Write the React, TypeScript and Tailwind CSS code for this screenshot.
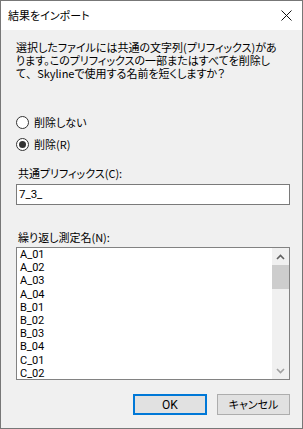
import React from "react";

const jp = "font-['Noto_Sans_CJK_JP',sans-serif] [font-feature-settings:'palt']";
const latin = "font-['Roboto','Noto_Sans_CJK_JP',sans-serif]";

const items = ["A_01", "A_02", "A_03", "A_04", "B_01", "B_02", "B_03", "B_04", "C_01", "C_02"];

function Radio({ checked, label }: { checked?: boolean; label: React.ReactNode }) {
  return (
    <div className="flex items-center h-[13px]">
      <div className="w-[13px] h-[13px] rounded-full border border-[#333] bg-white flex items-center justify-center shrink-0">
        {checked && <div className="w-[7px] h-[7px] rounded-full bg-[#333]" />}
      </div>
      <span className="ml-[5px] text-[11px] leading-[13px]">{label}</span>
    </div>
  );
}

export default function App() {
  return (
    <div className={`w-[303px] h-[429px] border border-[#777] bg-[#f0f0f0] flex flex-col text-black ${jp}`}>
      <div className="h-[29px] bg-white flex items-center justify-between pl-[7px] pr-[9px] shrink-0">
        <span className="text-[11px] leading-[13px]">結果をインポート</span>
        <svg width="11" height="11" viewBox="0 0 11 11" className="mr-[1px]">
          <path d="M0.5 0.5 L10.5 10.5 M10.5 0.5 L0.5 10.5" stroke="#111" strokeWidth="1" />
        </svg>
      </div>
      <div className="flex flex-col pl-[15px] pr-[12px]">
        <p className="mt-[11px] text-[11px] leading-[13px] whitespace-nowrap">
          選択したファイルには共通の文字列(プリフィックス)があ
          <br />
          ります。このプリフィックスの一部またはすべてを削除し
          <br />
          て<span className="inline-block w-[11px]">、</span>Skylineで使用する名前を短くしますか？
        </p>
        <div className="mt-[36px] flex flex-col gap-[9px]">
          <Radio label="削除しない" />
          <Radio checked label="削除(R)" />
        </div>
        <div className="mt-[16px] pl-[2px] text-[11px] leading-[13px]">共通プリフィックス(C):</div>
        <div className={`mt-[4px] h-[21px] w-[274px] border border-[#7a7a7a] bg-white flex items-center pl-[2px] text-[11.5px] ${latin}`}>
          7_3_
        </div>
        <div className="mt-[26px] pl-[2px] text-[11px] leading-[13px]">繰り返し測定名(N):</div>
        <div className="mt-[3px] h-[133px] w-[274px] border border-[#828282] bg-white flex">
          <div className={`flex-1 pl-[3px] flex flex-col text-[11px] leading-[13.2px] ${latin}`}>
            {items.map((it) => (
              <div key={it}>{it}</div>
            ))}
          </div>
          <div className="w-[17px] bg-[#f0f0f0] flex flex-col items-center">
            <div className="h-[17px] w-full flex items-center justify-center">
              <svg width="9" height="6" viewBox="0 0 9 6">
                <path d="M1 5 L4.5 1.5 L8 5" stroke="#606060" strokeWidth="1.6" fill="none" />
              </svg>
            </div>
            <div className="w-full h-[24px] bg-[#cdcdcd]" />
            <div className="flex-1" />
            <div className="h-[17px] w-full flex items-center justify-center">
              <svg width="9" height="6" viewBox="0 0 9 6">
                <path d="M1 1 L4.5 4.5 L8 1" stroke="#a0a0a0" strokeWidth="1.6" fill="none" />
              </svg>
            </div>
          </div>
        </div>
        <div className="mt-[14px] flex justify-end gap-[10px]">
          <button className={`w-[74px] h-[21px] border-2 border-[#0078d7] bg-[#e1e1e1] text-[12px] leading-none flex items-center justify-center ${latin}`}>
            OK
          </button>
          <button className="w-[73px] h-[21px] border border-[#adadad] bg-[#e1e1e1] text-[11px] leading-none flex items-center justify-center">
            キャンセル
          </button>
        </div>
      </div>
    </div>
  );
}
